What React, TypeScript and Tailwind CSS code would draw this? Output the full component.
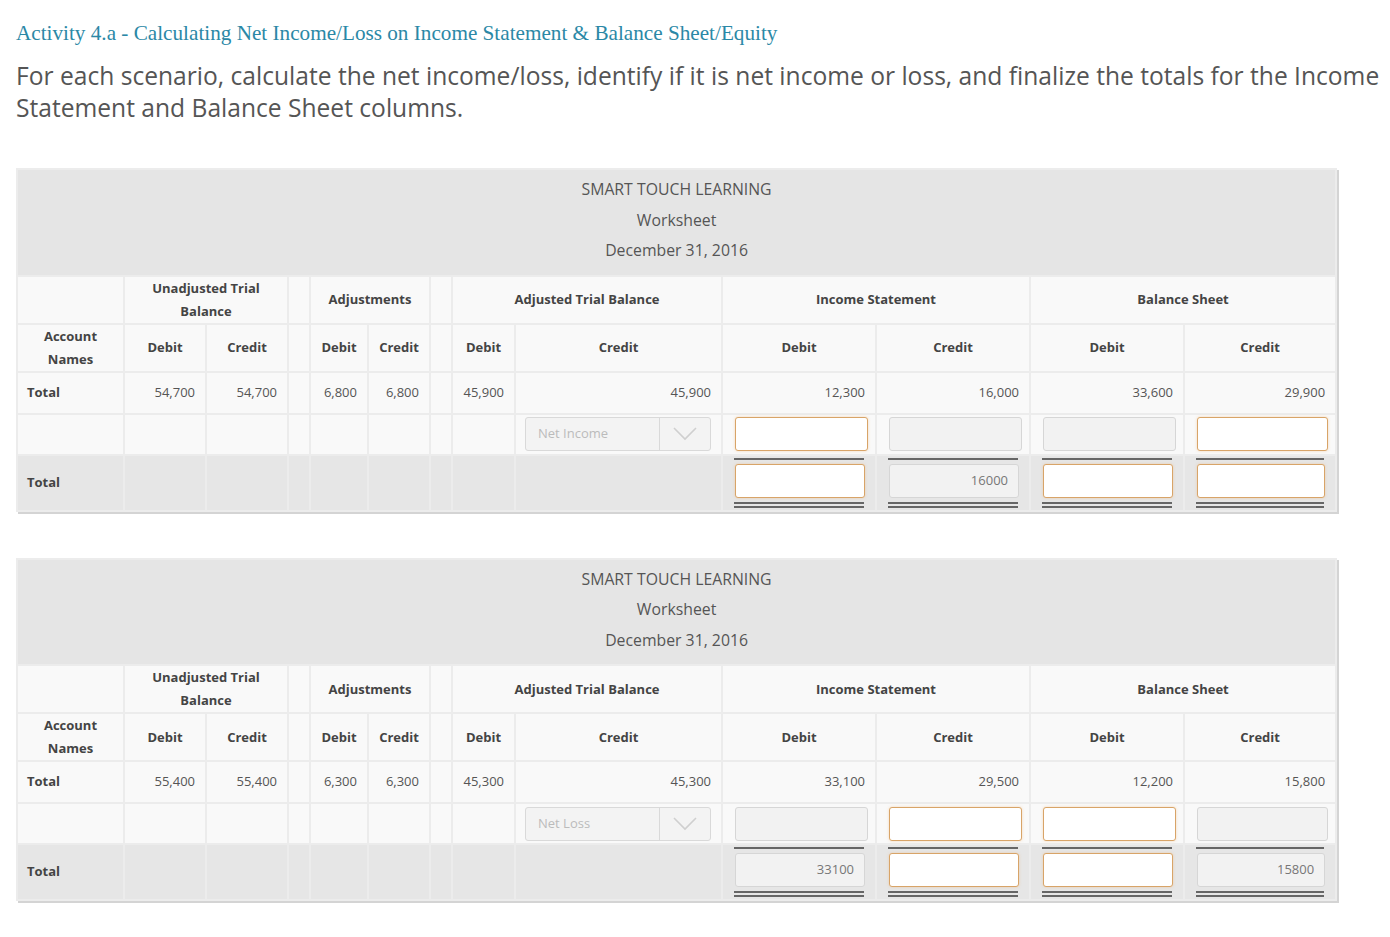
import React from 'react';

type Sheet = {
  unadj: [string, string];
  adj: [string, string];
  atb: [string, string];
  is: [string, string];
  bs: [string, string];
  label: string;
  // net row: which of is-debit, is-credit, bs-debit, bs-credit are open inputs
  net: [boolean, boolean, boolean, boolean];
  // final row: value shown (string) or open input (null)
  final: [string | null, string | null, string | null, string | null];
};

const sheets: Sheet[] = [
  {
    unadj: ['54,700', '54,700'],
    adj: ['6,800', '6,800'],
    atb: ['45,900', '45,900'],
    is: ['12,300', '16,000'],
    bs: ['33,600', '29,900'],
    label: 'Net Income',
    net: [true, false, false, true],
    final: [null, '16000', null, null],
  },
  {
    unadj: ['55,400', '55,400'],
    adj: ['6,300', '6,300'],
    atb: ['45,300', '45,300'],
    is: ['33,100', '29,500'],
    bs: ['12,200', '15,800'],
    label: 'Net Loss',
    net: [false, true, true, false],
    final: ['33100', null, null, '15800'],
  },
];

const cell = 'bg-[#f9f9f9] align-middle';
const th = 'bg-[#f9f9f9] align-middle text-center font-bold text-[13px] leading-[23px] text-[#444]';
const num = 'bg-[#f9f9f9] align-middle text-right text-[13px] text-[#555] pr-[10px]';

function Box({ open, value }: { open: boolean; value?: string }) {
  if (open) {
    return (
      <div className="h-[34px] w-full rounded-[3px] border border-[#d8a468] bg-white shadow-[0_0_3px_rgba(240,160,70,0.35)]" />
    );
  }
  return (
    <div className="flex h-[34px] w-full items-center justify-end rounded-[3px] border border-[#d6d6d6] bg-[#f2f2f2] pr-[10px] text-[13px] text-[#777]">
      {value}
    </div>
  );
}

function FinalCell({ value }: { value: string | null }) {
  return (
    <td className="bg-[#e6e6e6] align-middle">
      <div className="px-[10px]">
        <div className="mx-[1px] border-t-[2px] border-[#666]" />
        <div className="mt-[4px] ml-[2px]">
          <Box open={value === null} value={value ?? undefined} />
        </div>
        <div className="mx-[1px] mt-[4px] h-[6px] border-y-[2px] border-[#666]" />
      </div>
    </td>
  );
}

function Worksheet({ s }: { s: Sheet }) {
  return (
    <div className="w-[1321px] shadow-[2px_2px_0_#d4d4d4]">
      <table className="w-[1321px] table-fixed border-separate border-spacing-[2px] bg-[#ececec]">
        <colgroup>
          <col className="w-[105px]" />
          <col className="w-[80px]" />
          <col className="w-[80px]" />
          <col className="w-[20px]" />
          <col className="w-[56px]" />
          <col className="w-[60px]" />
          <col className="w-[20px]" />
          <col className="w-[61px]" />
          <col className="w-[205px]" />
          <col className="w-[152px]" />
          <col className="w-[152px]" />
          <col className="w-[152px]" />
          <col className="w-[150px]" />
        </colgroup>
        <tbody>
          <tr>
            <td colSpan={13} className="bg-[#e5e5e5] pt-[4px] pb-[9px] text-center text-[15.8px] leading-[30.5px] text-[#555]">
              <div>SMART TOUCH LEARNING</div>
              <div>Worksheet</div>
              <div>December 31, 2016</div>
            </td>
          </tr>
          <tr className="h-[45px]">
            <td className={cell} />
            <td colSpan={2} className={th}>Unadjusted Trial<br />Balance</td>
            <td className={cell} />
            <td colSpan={2} className={th}>Adjustments</td>
            <td className={cell} />
            <td colSpan={2} className={th}>Adjusted Trial Balance</td>
            <td colSpan={2} className={th}>Income Statement</td>
            <td colSpan={2} className={th}>Balance Sheet</td>
          </tr>
          <tr className="h-[46px]">
            <td className={th}>Account<br />Names</td>
            <td className={th}>Debit</td>
            <td className={th}>Credit</td>
            <td className={cell} />
            <td className={th}>Debit</td>
            <td className={th}>Credit</td>
            <td className={cell} />
            <td className={th}>Debit</td>
            <td className={th}>Credit</td>
            <td className={th}>Debit</td>
            <td className={th}>Credit</td>
            <td className={th}>Debit</td>
            <td className={th}>Credit</td>
          </tr>
          <tr className="h-[40px]">
            <td className={`${cell} pl-[9px] text-[13px] font-bold text-[#444]`}>Total</td>
            <td className={num}>{s.unadj[0]}</td>
            <td className={num}>{s.unadj[1]}</td>
            <td className={cell} />
            <td className={num}>{s.adj[0]}</td>
            <td className={num}>{s.adj[1]}</td>
            <td className={cell} />
            <td className={num}>{s.atb[0]}</td>
            <td className={num}>{s.atb[1]}</td>
            <td className={num}>{s.is[0]}</td>
            <td className={num}>{s.is[1]}</td>
            <td className={num}>{s.bs[0]}</td>
            <td className={num}>{s.bs[1]}</td>
          </tr>
          <tr className="h-[39px]">
            <td className={cell} />
            <td className={cell} />
            <td className={cell} />
            <td className={cell} />
            <td className={cell} />
            <td className={cell} />
            <td className={cell} />
            <td className={cell} />
            <td className={cell}>
              <div className="ml-[9px] mr-[10px] flex h-[34px] items-center rounded-[3px] border border-[#d9d9d9] bg-[#f3f3f3]">
                <span className="flex-1 pl-[12px] text-[13px] text-[#bbb]">{s.label}</span>
                <span className="flex h-full w-[51px] items-center justify-center border-l border-[#d9d9d9]">
                  <svg width="24" height="14" viewBox="0 0 24 14" fill="none">
                    <polyline points="1,1 12,12 23,1" stroke="#cfcfcf" strokeWidth="1.6" />
                  </svg>
                </span>
              </div>
            </td>
            {s.net.map((open, i) => (
              <td key={i} className={cell}>
                <div className="ml-[12px] mr-[7px]">
                  <Box open={open} />
                </div>
              </td>
            ))}
          </tr>
          <tr className="h-[54px]">
            <td className="bg-[#e6e6e6] pl-[9px] align-middle text-[13px] font-bold text-[#444]">Total</td>
            <td className="bg-[#e6e6e6]" />
            <td className="bg-[#e6e6e6]" />
            <td className="bg-[#e6e6e6]" />
            <td className="bg-[#e6e6e6]" />
            <td className="bg-[#e6e6e6]" />
            <td className="bg-[#e6e6e6]" />
            <td className="bg-[#e6e6e6]" />
            <td className="bg-[#e6e6e6]" />
            {s.final.map((v, i) => (
              <FinalCell key={i} value={v} />
            ))}
          </tr>
        </tbody>
      </table>
    </div>
  );
}

export default function App() {
  return (
    <div className="min-h-[937px] bg-white pl-[16px] pt-[19px] pb-[30px] font-['Open_Sans',sans-serif]">
      <h1 className="font-['Liberation_Serif',serif] text-[21.2px] leading-[28px] text-[#2b88a6]">
        Activity 4.a - Calculating Net Income/Loss on Income Statement &amp; Balance Sheet/Equity
      </h1>
      <p className="mt-[13px] text-[24.6px] leading-[32px] text-[#555]">
        For each scenario, calculate the net income/loss, identify if it is net income or loss, and finalize the totals for the Income Statement and Balance Sheet columns.
      </p>
      <div className="mt-[44px] flex flex-col gap-[46px]">
        {sheets.map((s, i) => (
          <Worksheet key={i} s={s} />
        ))}
      </div>
    </div>
  );
}
